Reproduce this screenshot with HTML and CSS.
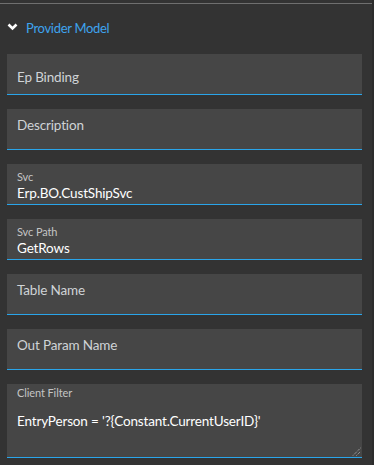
FILE: index.html
```html
<!DOCTYPE html>
<html lang="en">
<head>
  <meta charset="UTF-8" />
  <meta name="viewport" content="width=device-width, initial-scale=1.0" />
  <title>Provider Model</title>
  <link rel="stylesheet" href="styles.css">
</head>
<body>
  <div class="panel">
    <div class="panel-head">
      <svg class="chevron" width="11" height="8" viewBox="0 0 11 8">
        <polyline points="1.5,1.5 5.5,5.5 9.5,1.5" fill="none" stroke="#fff" stroke-width="2.6" />
      </svg>
      <span class="panel-title">Provider Model</span>
    </div>

    <div class="fields">
      <div class="field field-focus">
        <div class="placeholder">Ep Binding</div>
      </div>
      <div class="field">
        <div class="placeholder">Description</div>
      </div>
      <div class="field">
        <div class="label">Svc</div>
        <div class="value">Erp.BO.CustShipSvc</div>
      </div>
      <div class="field">
        <div class="label">Svc Path</div>
        <div class="value">GetRows</div>
      </div>
      <div class="field">
        <div class="placeholder">Table Name</div>
      </div>
      <div class="field">
        <div class="placeholder">Out Param Name</div>
      </div>
      <div class="field field-area">
        <div class="label">Client Filter</div>
        <div class="value">EntryPerson = '?{Constant.CurrentUserID}'</div>
        <svg class="grip" width="9" height="9" viewBox="0 0 9 9">
          <line x1="1" y1="8.5" x2="8.5" y2="1" stroke="#bbb" stroke-width="1" stroke-dasharray="1 1" />
          <line x1="4.5" y1="8.5" x2="8.5" y2="4.5" stroke="#bbb" stroke-width="1" stroke-dasharray="1 1" />
        </svg>
      </div>
    </div>
  </div>
</body>
</html>
```

FILE: styles.css
```css
* { box-sizing: border-box; margin: 0; padding: 0; }
html, body { height: 100%; }
body {
  background-color: #2c2c2c;
  font-family: Lato, "Open Sans", sans-serif;
  color: #fff;
}
.panel {
  background-color: #333;
  margin-right: 2px;
  min-height: 100%;
  padding-top: 3px;
}
.panel-head {
  border-top: 1px solid #6f6f6f;
  height: 51px;
  display: flex;
  align-items: flex-start;
  padding: 16px 0 0 7px;
}
.chevron { margin-top: 3px; margin-right: 8px; }
.panel-title {
  color: #3ea3ee;
  font-size: 13px;
  letter-spacing: -0.3px;
  line-height: 16px;
}
.fields {
  display: flex;
  flex-direction: column;
  gap: 14px;
  padding: 0 10px 0 7px;
}
.field {
  position: relative;
  background-color: #464646;
  border-bottom: 1px solid #2aa5ea;
  height: 41px;
  padding: 0 10px;
}
.placeholder {
  color: #cfd3d6;
  font-size: 13.5px;
  letter-spacing: -0.15px;
  line-height: 20px;
  padding-top: 6px;
}
.field-focus .placeholder { padding-top: 13px; }
.label {
  color: #c4c4c4;
  font-size: 11px;
  letter-spacing: -0.1px;
  line-height: 14px;
  padding-top: 6px;
}
.value {
  color: #fff;
  font-size: 13.5px;
  letter-spacing: -0.15px;
  line-height: 18px;
}
.field-area { height: 74px; }
.field-area .label { padding-top: 2px; }
.field-area .value { padding-top: 12px; }
.grip {
  position: absolute;
  right: 1px;
  bottom: 1px;
}
```
